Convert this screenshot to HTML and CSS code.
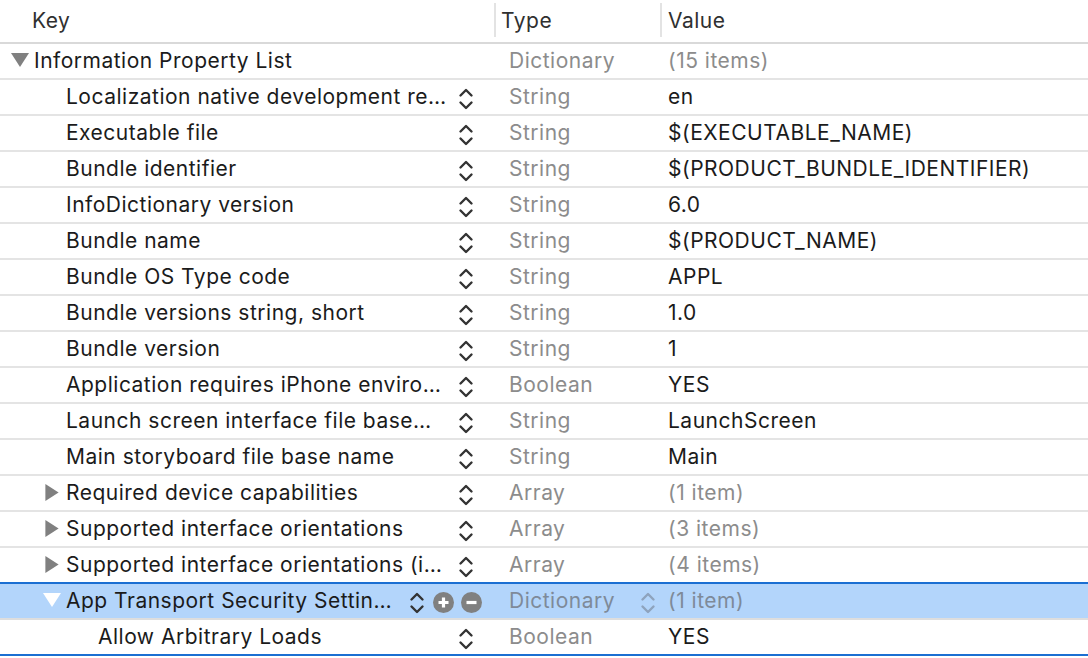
FILE: index.html
```html
<!DOCTYPE html>
<html>
<head>
<meta charset="utf-8">
<link rel="stylesheet" href="styles.css">
</head>
<body>
<svg width="0" height="0" class="defs">
  <defs>
    <symbol id="stepper" viewBox="0 0 16 26">
      <path d="M2.5 9.5 L8 4 L13.5 9.5" fill="none" stroke="currentColor" stroke-width="2.4" stroke-linecap="round" stroke-linejoin="round"/>
      <path d="M2.5 16.5 L8 22 L13.5 16.5" fill="none" stroke="currentColor" stroke-width="2.4" stroke-linecap="round" stroke-linejoin="round"/>
    </symbol>
    <symbol id="tri-down" viewBox="0 0 18 14">
      <path d="M0 0 H18 L9 14 Z" fill="currentColor"/>
    </symbol>
    <symbol id="tri-right" viewBox="0 0 14 18">
      <path d="M0 0 L14 9 L0 18 Z" fill="currentColor"/>
    </symbol>
  </defs>
</svg>
<div class="plist">
  <div class="row header">
    <div class="cell key-h">Key</div>
    <div class="cell type-h">Type</div>
    <div class="cell value-h">Value</div>
  </div>

  <div class="row">
    <div class="cell key lvl0"><span class="disc"><svg class="tri-d"><use href="#tri-down"/></svg></span><span class="ktext">Information Property List</span></div>
    <div class="cell type">Dictionary</div>
    <div class="cell value muted">(15 items)</div>
  </div>

  <div class="row">
    <div class="cell key lvl1"><span class="disc"></span><span class="ktext">Localization native development re…</span><svg class="step"><use href="#stepper"/></svg></div>
    <div class="cell type">String</div>
    <div class="cell value">en</div>
  </div>
  <div class="row">
    <div class="cell key lvl1"><span class="disc"></span><span class="ktext">Executable file</span><svg class="step"><use href="#stepper"/></svg></div>
    <div class="cell type">String</div>
    <div class="cell value">$(EXECUTABLE_NAME)</div>
  </div>
  <div class="row">
    <div class="cell key lvl1"><span class="disc"></span><span class="ktext">Bundle identifier</span><svg class="step"><use href="#stepper"/></svg></div>
    <div class="cell type">String</div>
    <div class="cell value">$(PRODUCT_BUNDLE_IDENTIFIER)</div>
  </div>
  <div class="row">
    <div class="cell key lvl1"><span class="disc"></span><span class="ktext">InfoDictionary version</span><svg class="step"><use href="#stepper"/></svg></div>
    <div class="cell type">String</div>
    <div class="cell value">6.0</div>
  </div>
  <div class="row">
    <div class="cell key lvl1"><span class="disc"></span><span class="ktext">Bundle name</span><svg class="step"><use href="#stepper"/></svg></div>
    <div class="cell type">String</div>
    <div class="cell value">$(PRODUCT_NAME)</div>
  </div>
  <div class="row">
    <div class="cell key lvl1"><span class="disc"></span><span class="ktext">Bundle OS Type code</span><svg class="step"><use href="#stepper"/></svg></div>
    <div class="cell type">String</div>
    <div class="cell value">APPL</div>
  </div>
  <div class="row">
    <div class="cell key lvl1"><span class="disc"></span><span class="ktext">Bundle versions string, short</span><svg class="step"><use href="#stepper"/></svg></div>
    <div class="cell type">String</div>
    <div class="cell value">1.0</div>
  </div>
  <div class="row">
    <div class="cell key lvl1"><span class="disc"></span><span class="ktext">Bundle version</span><svg class="step"><use href="#stepper"/></svg></div>
    <div class="cell type">String</div>
    <div class="cell value">1</div>
  </div>
  <div class="row">
    <div class="cell key lvl1"><span class="disc"></span><span class="ktext">Application requires iPhone enviro…</span><svg class="step"><use href="#stepper"/></svg></div>
    <div class="cell type">Boolean</div>
    <div class="cell value">YES</div>
  </div>
  <div class="row">
    <div class="cell key lvl1"><span class="disc"></span><span class="ktext">Launch screen interface file base…</span><svg class="step"><use href="#stepper"/></svg></div>
    <div class="cell type">String</div>
    <div class="cell value">LaunchScreen</div>
  </div>
  <div class="row">
    <div class="cell key lvl1"><span class="disc"></span><span class="ktext">Main storyboard file base name</span><svg class="step"><use href="#stepper"/></svg></div>
    <div class="cell type">String</div>
    <div class="cell value">Main</div>
  </div>
  <div class="row">
    <div class="cell key lvl1"><span class="disc"><svg class="tri-r"><use href="#tri-right"/></svg></span><span class="ktext">Required device capabilities</span><svg class="step"><use href="#stepper"/></svg></div>
    <div class="cell type">Array</div>
    <div class="cell value muted">(1 item)</div>
  </div>
  <div class="row">
    <div class="cell key lvl1"><span class="disc"><svg class="tri-r"><use href="#tri-right"/></svg></span><span class="ktext">Supported interface orientations</span><svg class="step"><use href="#stepper"/></svg></div>
    <div class="cell type">Array</div>
    <div class="cell value muted">(3 items)</div>
  </div>
  <div class="row before-sel">
    <div class="cell key lvl1"><span class="disc"><svg class="tri-r"><use href="#tri-right"/></svg></span><span class="ktext">Supported interface orientations (i…</span><svg class="step"><use href="#stepper"/></svg></div>
    <div class="cell type">Array</div>
    <div class="cell value muted">(4 items)</div>
  </div>
  <div class="row selected">
    <div class="cell key lvl1"><span class="disc"><svg class="tri-d sel"><use href="#tri-down"/></svg></span><span class="ktext">App Transport Security Settin…</span>
      <span class="controls">
        <svg class="step"><use href="#stepper"/></svg>
        <svg class="pm" viewBox="0 0 21 21"><circle cx="10.5" cy="10.5" r="10.5" fill="#808080"/><path d="M10.5 5.5 V15.5 M5.5 10.5 H15.5" stroke="#fff" stroke-width="3.2"/></svg>
        <svg class="pm" viewBox="0 0 21 21"><circle cx="10.5" cy="10.5" r="10.5" fill="#808080"/><path d="M5.5 10.5 H15.5" stroke="#fff" stroke-width="3.2"/></svg>
      </span>
    </div>
    <div class="cell type">Dictionary<svg class="step type-step"><use href="#stepper"/></svg></div>
    <div class="cell value muted">(1 item)</div>
  </div>
  <div class="row last-sel">
    <div class="cell key lvl2"><span class="disc"></span><span class="ktext">Allow Arbitrary Loads</span><svg class="step"><use href="#stepper"/></svg></div>
    <div class="cell type">Boolean</div>
    <div class="cell value">YES</div>
  </div>
</div>
</body>
</html>
```

FILE: styles.css
```css
html, body {
  margin: 0;
  padding: 0;
  background: #ffffff;
}
body {
  width: 1088px;
  height: 658px;
  overflow: hidden;
  font-family: Inter, "Liberation Sans", Arial, sans-serif;
  font-size: 21px;
  letter-spacing: 0.5px;
  color: #1b1b1b;
}
.defs {
  position: absolute;
  width: 0;
  height: 0;
}
.plist {
  display: flex;
  flex-direction: column;
}
.row {
  display: grid;
  grid-template-columns: 496px 166px 1fr;
  height: 34px;
  border-bottom: 2px solid #e4e4e4;
  align-items: center;
}
.row.header {
  grid-template-columns: 494px 166px 1fr;
  height: 42px;
  border-bottom: 2px solid #d9d9d9;
  color: #303030;
  align-items: start;
}
.cell {
  display: flex;
  align-items: center;
  box-sizing: border-box;
  height: 100%;
  padding-bottom: 2px;
  white-space: nowrap;
  overflow: hidden;
  min-width: 0;
}
.header .cell {
  height: 34px;
  margin-top: 3px;
  padding-bottom: 0;
}
.key-h { padding-left: 32px; }
.type-h {
  border-left: 2px solid #e3e3e3;
  padding-left: 5px;
}
.value-h {
  border-left: 2px solid #e3e3e3;
  padding-left: 6px;
}
.key {
  padding-right: 22px;
}
.lvl0 { padding-left: 11px; }
.lvl1 { padding-left: 43px; }
.lvl2 { padding-left: 75px; }
.disc {
  width: 23px;
  flex: none;
  display: flex;
  align-items: center;
}
.ktext {
  flex: 1;
  overflow: hidden;
  text-overflow: ellipsis;
}
.tri-d {
  width: 18px;
  height: 14px;
  color: #808080;
}
.tri-d.sel {
  color: #ffffff;
}
.tri-r {
  width: 14px;
  height: 17px;
  margin-left: 2px;
  color: #808080;
}
.step {
  width: 16px;
  height: 26px;
  flex: none;
  color: #333333;
  margin-top: 5px;
}
.type {
  padding-left: 13px;
  color: #8c8c8c;
}
.value {
  padding-left: 6px;
  color: #1b1b1b;
}
.value.muted {
  color: #8c8c8c;
}
.before-sel {
  border-bottom-color: #1b6fd2;
}
.selected {
  background: #b3d5fb;
  border-bottom-color: #dedede;
}
.selected .type,
.selected .value.muted {
  color: #7e8a99;
}
.selected .key {
  padding-right: 14px;
}
.controls {
  display: flex;
  align-items: center;
  gap: 8px;
  flex: none;
}
.pm {
  width: 21px;
  height: 21px;
  flex: none;
  margin-top: 4px;
}
.controls .pm + .pm {
  margin-left: -1px;
}
.selected .type {
  justify-content: space-between;
  padding-right: 6px;
}
.type-step {
  color: #8ea3bd;
}
.last-sel {
  border-bottom-color: #1b6fd2;
}
```
